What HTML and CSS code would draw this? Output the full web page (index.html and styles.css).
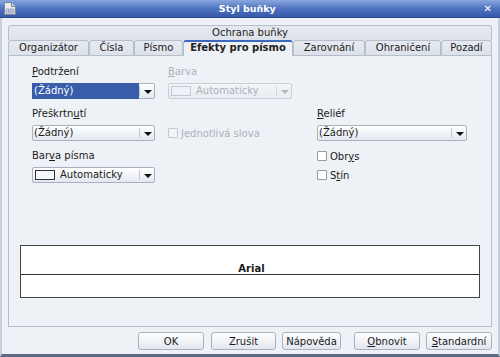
FILE: index.html
```html
<!DOCTYPE html>
<html lang="cs">

<head>
  <meta charset="UTF-8" />
  <title>Styl buňky</title>
  <link rel="stylesheet" href="styles.css">
</head>

<body>
  <div class="window">
    <div class="titlebar">
      <svg class="app-icon" width="14" height="15" viewBox="0 0 14 15">
        <path d="M1.5 1.5h7l4 4v8h-11z" fill="#e9edf3" stroke="#7a879a" />
        <path d="M8.5 1.5v4h4" fill="#c9d1dd" stroke="#7a879a" />
        <path d="M3 8h8v4H3z M3 10h8 M5.5 8v4 M8 8v4" fill="none" stroke="#8a96a8" stroke-width="0.8" />
      </svg>
      <span class="title">Styl buňky</span>
      <span class="close">✕</span>
    </div>

    <div class="content">
      <div class="tabs-top">
        <div class="tab wide">Ochrana buňky</div>
      </div>
      <div class="tabs">
        <div class="tab" style="width:81px">Organizátor</div>
        <div class="tab" style="width:45px">Čísla</div>
        <div class="tab" style="width:49px">Písmo</div>
        <div class="tab active" style="width:110px">Efekty pro písmo</div>
        <div class="tab" style="width:72px">Zarovnání</div>
        <div class="tab" style="width:76px">Ohraničení</div>
        <div class="tab" style="width:51px">Pozadí</div>
      </div>

      <div class="panel">
        <div class="form">
          <label class="c1 r1"><u>P</u>odtržení</label>
          <label class="c2 r1 disabled"><u>B</u>arva</label>

          <div class="combo c1 r2 selected">
            <span class="value">(Žádný)</span>
            <span class="arrow"></span>
          </div>
          <div class="combo c2 r2 disabled">
            <span class="value"><span class="swatch"></span>Automaticky</span>
            <span class="arrow"></span>
          </div>

          <label class="c1 r3">Přeškrtn<u>u</u>tí</label>
          <label class="c3 r3"><u>R</u>eliéf</label>

          <div class="combo c1 r4">
            <span class="value">(Žádný)</span>
            <span class="arrow"></span>
          </div>
          <div class="check c2 r4 disabled">
            <span class="box"></span><span><u>J</u>ednotlivá slova</span>
          </div>
          <div class="combo c3 r4">
            <span class="value">(Žádný)</span>
            <span class="arrow"></span>
          </div>

          <label class="c1 r5">Bar<u>v</u>a písma</label>
          <div class="check c3 r5">
            <span class="box"></span><span>Obr<u>y</u>s</span>
          </div>

          <div class="combo c1 r6">
            <span class="value"><span class="swatch"></span>Automaticky</span>
            <span class="arrow"></span>
          </div>
          <div class="check c3 r6 low">
            <span class="box"></span><span>S<u>t</u>ín</span>
          </div>
        </div>

        <div class="preview">
          <div class="preview-top"><span>Arial</span></div>
          <div class="preview-bottom"></div>
        </div>
      </div>

      <div class="buttons">
        <button style="width:66px">OK</button>
        <button class="spaced" style="width:65px">Zrušit</button>
        <button style="width:59px">Nápověda</button>
        <button class="gap" style="width:66px"><u>O</u>bnovit</button>
        <button style="width:66px"><u>S</u>tandardní</button>
      </div>
    </div>
  </div>
</body>

</html>
```

FILE: styles.css
```css
* {
  box-sizing: border-box;
}

body {
  margin: 0;
  font-family: 'DejaVu Sans', sans-serif;
  font-size: 10px;
  color: #1a1a1a;
  background: #eef1f5;
}

u {
  text-decoration: underline;
  text-underline-offset: 1px;
}

.window {
  width: 500px;
  height: 357px;
  display: flex;
  flex-direction: column;
  background: #eef1f5;
  border-left: 2px solid #c6cfdc;
  border-right: 2px solid #c6cfdc;
  border-bottom: 3px solid #5d6b80;
}

.titlebar {
  height: 18px;
  margin: 0 -2px;
  display: flex;
  align-items: center;
  background: linear-gradient(#8ba7dd, #4e73c0 50%, #3659aa);
  color: white;
  border-bottom: 1px solid #2c4a8c;
}

.app-icon {
  margin-left: 3px;
}

.title {
  flex: 1;
  text-align: center;
  font-weight: bold;
  font-size: 9.5px;
  margin-right: 6px;
}

.close {
  font-weight: bold;
  font-size: 10px;
  margin-right: 8px;
}

.content {
  flex: 1;
  display: flex;
  flex-direction: column;
  padding: 7px 6px 0 6px;
}

.tabs-top,
.tabs {
  display: flex;
  height: 15px;
}

.tab {
  height: 15px;
  line-height: 14px;
  text-align: center;
  color: #222;
  background: linear-gradient(#e6eaf0, #dde2ea);
  border: 1px solid #b5bfcc;
  border-bottom: none;
  border-radius: 3px 3px 0 0;
}

.tab.wide {
  flex: 1;
}

.tab.active {
  background: #eef1f5;
  font-weight: bold;
  border-top: 2px solid #3d68bd;
  line-height: 12px;
  position: relative;
  z-index: 1;
  margin-bottom: -1px;
  height: 16px;
}

.panel {
  height: 272px;
  border: 1px solid #b5bfcc;
  padding: 10px 0 0 23px;
  display: flex;
  flex-direction: column;
}

.form {
  display: grid;
  grid-template-columns: 123px 124px 150px;
  grid-template-rows: 17px 25px 17px 25px 17px 16px;
  column-gap: 13px;
}

.form .c1 { grid-column: 1; }
.form .c2 { grid-column: 2; }
.form .c3 { grid-column: 3; margin-left: 12px; width: 150px; }
.form .r1 { grid-row: 1; }
.form .r2 { grid-row: 2; }
.form .r3 { grid-row: 3; }
.form .r4 { grid-row: 4; }
.form .r5 { grid-row: 5; }
.form .r6 { grid-row: 6; }

label {
  line-height: 12px;
}

.disabled {
  color: #aab2be;
}

.combo {
  height: 16px;
  display: flex;
  border: 1px solid #a7b1bf;
  border-radius: 2px;
  background: linear-gradient(#ffffff, #e3e8ef);
}

.combo .value {
  flex: 1;
  display: flex;
  align-items: center;
  padding-left: 1px;
  line-height: 14px;
}

.combo .arrow {
  width: 15px;
  position: relative;
  border-left: 1px solid #c3cad5;
  margin: 2px 0;
}

.combo .arrow::after {
  content: '';
  position: absolute;
  left: 4px;
  top: 4px;
  border-left: 4px solid transparent;
  border-right: 4px solid transparent;
  border-top: 4px solid #111;
}

.combo.selected .value {
  background: #3a5dab;
  color: white;
  margin: -1px 0 -1px -1px;
  padding-left: 2px;
}

.combo.disabled {
  background: linear-gradient(#f3f5f8, #e8ecf1);
  border-color: #c9d0da;
}

.combo.disabled .arrow {
  border-left-color: #d3d8e0;
}

.combo.disabled .arrow::after {
  border-top-color: #b0b8c4;
}

.swatch {
  width: 20px;
  height: 10px;
  margin: 0 5px 0 1px;
  border: 1px solid #333;
  background: #f4f6f9;
}

.combo.disabled .swatch {
  border-color: #c3c9d3;
  background: #eef1f5;
}

.check {
  display: flex;
  align-items: center;
  gap: 3px;
  height: 16px;
}

.check.c3 {
  height: 12px;
}

.check.low {
  margin-top: 2px;
}

.check .box {
  width: 10px;
  height: 10px;
  border: 1px solid #8f9aab;
  border-radius: 1px;
  background: white;
}

.check.disabled .box {
  border-color: #c3c9d3;
  background: #f2f4f7;
}

.preview {
  margin: 62px 0 0 -12px;
  width: 460px;
  height: 53px;
  border: 1px solid #444;
  background: white;
  display: flex;
  flex-direction: column;
}

.preview-top {
  height: 29px;
  border-bottom: 1px solid #333;
  display: flex;
  align-items: flex-end;
  justify-content: center;
  font-weight: bold;
  font-size: 10px;
  line-height: 10px;
}

.preview-top span {
  margin-left: 3px;
}

.buttons {
  display: flex;
  justify-content: flex-end;
  gap: 6px;
  margin-top: 5px;
}

button {
  height: 18px;
  padding: 0;
  font-family: inherit;
  font-size: 10px;
  color: #1a1a1a;
  border: 1px solid #a7b1bf;
  border-radius: 3px;
  background: linear-gradient(#ffffff, #e2e7ee);
}

button.spaced {
  margin-left: 1px;
}

button.gap {
  margin-left: 7px;
}
```
